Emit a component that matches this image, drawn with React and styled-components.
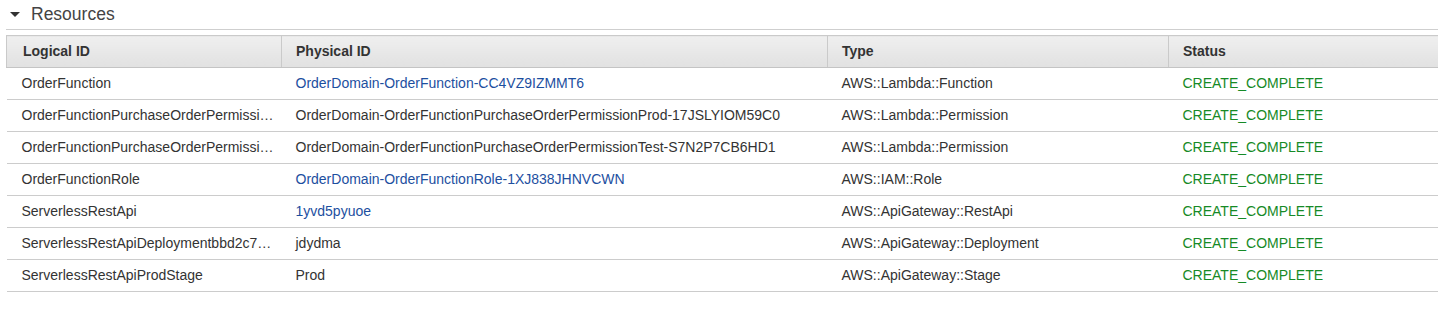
import styled, { createGlobalStyle } from "styled-components";

const GlobalStyle = createGlobalStyle`
  body {
    margin: 0;
    background: #fff;
    font-family: "Liberation Sans", Arial, Helvetica, sans-serif;
    color: #333;
  }
`;

const Section = styled.div`
  padding-left: 6px;
`;

const Heading = styled.div`
  display: flex;
  align-items: center;
  height: 29px;
  padding-left: 4px;
  gap: 11px;
  border-bottom: 1px solid #cfcfcf;
  font-size: 17.5px;
  color: #444;
`;

const Caret = styled.span`
  width: 0;
  height: 0;
  border-left: 5px solid transparent;
  border-right: 5px solid transparent;
  border-top: 5px solid #333;
  margin-top: -1px;
`;

const Table = styled.table`
  width: 100%;
  margin-top: 5px;
  border-collapse: collapse;
  table-layout: fixed;
  font-size: 14px;
`;

const HeadCell = styled.th`
  height: 30px;
  padding: 0 8px 1px ${({ $first }) => ($first ? 16 : 14)}px;
  text-align: left;
  font-weight: 700;
  color: #333;
  background: linear-gradient(#efefef, #e1e1e1);
  border-top: 1px solid #cacaca;
  border-bottom: 1px solid #c4c4c4;
  border-left: 1px solid #cacaca;
`;

const Cell = styled.td`
  height: 30px;
  padding: 0 6px 1px ${({ $first }) => ($first ? 15 : 14)}px;
  border-bottom: 1px solid #cccccc;
  white-space: nowrap;
  overflow: hidden;
  text-overflow: ellipsis;
  color: ${({ $tone }) =>
    $tone === "link" ? "#1d4f9f" : $tone === "ok" ? "#168a26" : "#333"};
`;

const rows = [
  ["OrderFunction", "OrderDomain-OrderFunction-CC4VZ9IZMMT6", true, "AWS::Lambda::Function"],
  ["OrderFunctionPurchaseOrderPermissionProd", "OrderDomain-OrderFunctionPurchaseOrderPermissionProd-17JSLYIOM59C0", false, "AWS::Lambda::Permission"],
  ["OrderFunctionPurchaseOrderPermissionTest", "OrderDomain-OrderFunctionPurchaseOrderPermissionTest-S7N2P7CB6HD1", false, "AWS::Lambda::Permission"],
  ["OrderFunctionRole", "OrderDomain-OrderFunctionRole-1XJ838JHNVCWN", true, "AWS::IAM::Role"],
  ["ServerlessRestApi", "1yvd5pyuoe", true, "AWS::ApiGateway::RestApi"],
  ["ServerlessRestApiDeploymentbbd2c7a1b3", "jdydma", false, "AWS::ApiGateway::Deployment"],
  ["ServerlessRestApiProdStage", "Prod", false, "AWS::ApiGateway::Stage"],
];

export default function App() {
  return (
    <Section>
      <GlobalStyle />
      <Heading>
        <Caret />
        Resources
      </Heading>
      <Table>
        <colgroup>
          <col style={{ width: 275 }} />
          <col style={{ width: 546 }} />
          <col style={{ width: 341 }} />
          <col />
        </colgroup>
        <thead>
          <tr>
            <HeadCell $first>Logical ID</HeadCell>
            <HeadCell>Physical ID</HeadCell>
            <HeadCell>Type</HeadCell>
            <HeadCell>Status</HeadCell>
          </tr>
        </thead>
        <tbody>
          {rows.map(([logical, physical, linked, type]) => (
            <tr key={logical}>
              <Cell $first>{logical}</Cell>
              <Cell $tone={linked ? "link" : undefined}>{physical}</Cell>
              <Cell>{type}</Cell>
              <Cell $tone="ok">CREATE_COMPLETE</Cell>
            </tr>
          ))}
        </tbody>
      </Table>
    </Section>
  );
}
